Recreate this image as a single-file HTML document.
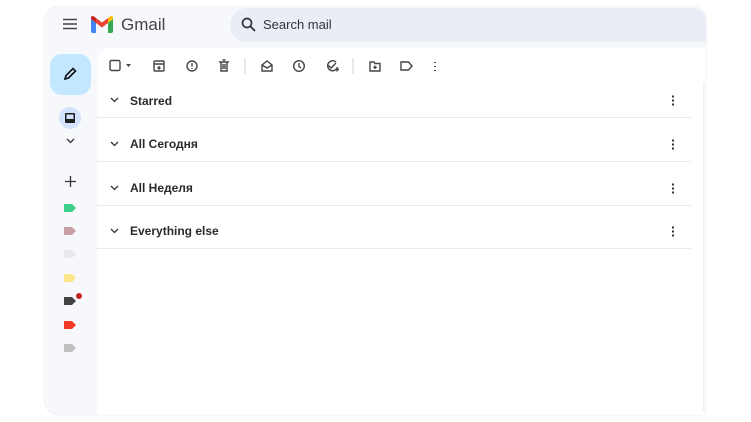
<!DOCTYPE html>
<html><head><style>
body{margin:0;width:751px;height:422px;background:#fff;position:relative;overflow:hidden;font-family:"Liberation Sans",Arial,sans-serif;}
.frame{position:absolute;left:44px;top:6px;width:662px;height:409px;background:#f6f8fc;border-radius:16px 14px 0 16px;box-shadow:0 0 1px #ccc;}
.main{position:absolute;left:97px;top:48px;width:609px;height:367px;background:#fff;border-radius:14px 0 0 0;}
.search{position:absolute;left:230px;top:8px;width:476px;height:34px;background:#e9eef6;border-radius:17px 14px 0 17px;}
.abs{position:absolute;}
.row{position:absolute;left:97px;width:594px;height:43px;border-bottom:1px solid #e8eaed;}
.row span{position:absolute;left:33px;top:12px;font-size:12px;font-weight:bold;color:#2a2a2a;}
.row svg.ch{position:absolute;left:13px;top:16px}
.row svg.k{position:absolute;left:574px;top:14px}
</style></head><body>
<div class="frame"></div>
<div class="search"></div>
<div class="main"></div>
<svg class="abs" style="left:63px;top:18px" width="14" height="12"><path d="M0 1.5h14M0 6h14M0 10.5h14" stroke="#444" stroke-width="1.5"/></svg>
<svg class="abs" style="left:91px;top:16px" width="22" height="17" viewBox="0 0 22 17">
<path d="M0 3v12a2 2 0 0 0 2 2h3V7z" fill="#4285f4"/><path d="M17 7v10h3a2 2 0 0 0 2-2V3z" fill="#34a853"/>
<path d="M0 3l5 4V2L3 0.5A2 2 0 0 0 0 3z" fill="#c5221f"/><path d="M5 2v5l6 4.5 6-4.5V2l-6 4.5z" fill="#ea4335"/><path d="M17 2v5l5-4a2 2 0 0 0-3-2.5z" fill="#fbbc04"/></svg>
<div class="abs" style="left:121px;top:15px;font-size:17px;color:#444">Gmail</div>
<svg class="abs" style="left:241px;top:17px" width="15" height="15"><circle cx="6" cy="6" r="4.5" fill="none" stroke="#333" stroke-width="1.7"/><path d="M9.3 9.3L14 14" stroke="#333" stroke-width="1.8"/></svg>
<div class="abs" style="left:263px;top:17px;font-size:13px;color:#333">Search mail</div>
<div class="abs" style="left:50px;top:54px;width:41px;height:41px;background:#c2e7ff;border-radius:12px"></div>
<svg class="abs" style="left:63px;top:67px" width="14" height="14"><path d="M2 12l1-3.5 7-7 2.5 2.5-7 7z" fill="none" stroke="#111" stroke-width="1.6"/></svg>
<div class="abs" style="left:59px;top:107px;width:22px;height:22px;background:#d3e3fd;border-radius:11px"></div>
<svg class="abs" style="left:64px;top:112px" width="12" height="12"><rect x="1" y="1" width="10" height="10" rx="1" fill="#1f1f1f"/><rect x="2.5" y="2.5" width="7" height="4.5" fill="#d3e3fd"/></svg>
<svg class="abs" style="left:66px;top:138px" width="9" height="6"><path d="M1 1l3.5 3.5L8 1" fill="none" stroke="#333" stroke-width="1.3"/></svg>
<svg class="abs" style="left:65px;top:176px" width="11" height="11"><path d="M5.5 0v11M0 5.5h11" stroke="#333" stroke-width="1.3"/></svg>
<svg class="abs" style="left:64px;top:204px" width="12" height="150">
<path d="M0 0h8l4 4-4 4H0z" fill="#3dd089"/>
<path d="M0 23h8l4 4-4 4H0z" fill="#c9a0a6"/>
<path d="M0 46h8l4 4-4 4H0z" fill="#e8e8ea"/>
<path d="M0 70h8l4 4-4 4H0z" fill="#fde68a"/>
<path d="M0 93h8l4 4-4 4H0z" fill="#444"/>
<path d="M0 117h8l4 4-4 4H0z" fill="#f23d26"/>
<path d="M0 140h8l4 4-4 4H0z" fill="#c0c0c0"/>
</svg>
<div class="abs" style="left:76px;top:293px;width:6px;height:6px;border-radius:3px;background:#c5221f"></div>
<svg class="abs" style="left:108px;top:58px" width="340" height="16" fill="none" stroke="#444" stroke-width="1.4">
<rect x="2" y="2.5" width="10" height="10" rx="1.5"/>
<path d="M18 6h5l-2.5 3z" fill="#444" stroke="none"/>
<rect x="46" y="3" width="10" height="10" rx="1"/><path d="M46 6h10M51 8v3M49.5 9.5l1.5 1.5 1.5-1.5"/>
<circle cx="84" cy="8" r="5"/><path d="M84 5v3.5M84 10v1"/>
<path d="M111 4h10M113 4v9h6V4M114.5 2h3M115 6v5M117 6v5"/>
<path d="M137 0v16" stroke="#ddd"/>
<path d="M154 7l5-4 5 4v6h-10z M154 7l5 3 5-3"/>
<circle cx="191" cy="8" r="5.3"/><path d="M191 5v3.5l2 1.5"/>
<path d="M228 4a5 5 0 1 0 1.5 5M220.5 7.5l2.5 2.5 5-5M227 11.5h4M229 9.5v4"/>
<path d="M245 0v16" stroke="#ddd"/>
<path d="M262 4h4l1 1.5h5v7.5h-10z M267 7.5v3.5M265.3 9.3h3.5"/>
<path d="M293 4h7.5l3.5 4-3.5 4h-7.5z"/>
<path d="M327 4v1M327 8v1M327 12v1" stroke-width="2"/>
</svg>
<div class="row" style="top:80px;height:37px"><svg class="ch" width="9" height="6" style="top:17px"><path d="M1 1l3.5 3.5L8 1" fill="none" stroke="#333" stroke-width="1.3"/></svg><span style="top:14px">Starred</span><svg class="k" width="4" height="14" style="top:14px"><path d="M2 1.5v2M2 5.5v2M2 9.5v2" stroke="#333" stroke-width="2"/></svg></div>
<div class="row" style="top:118px"><svg class="ch" width="9" height="6" style="top:23px"><path d="M1 1l3.5 3.5L8 1" fill="none" stroke="#333" stroke-width="1.3"/></svg><span style="top:19px">All Сегодня</span><svg class="k" width="4" height="14" style="top:20px"><path d="M2 1.5v2M2 5.5v2M2 9.5v2" stroke="#333" stroke-width="2"/></svg></div>
<div class="row" style="top:162px"><svg class="ch" width="9" height="6" style="top:23px"><path d="M1 1l3.5 3.5L8 1" fill="none" stroke="#333" stroke-width="1.3"/></svg><span style="top:19px">All Неделя</span><svg class="k" width="4" height="14" style="top:20px"><path d="M2 1.5v2M2 5.5v2M2 9.5v2" stroke="#333" stroke-width="2"/></svg></div>
<div class="row" style="top:205px"><svg class="ch" width="9" height="6" style="top:23px"><path d="M1 1l3.5 3.5L8 1" fill="none" stroke="#333" stroke-width="1.3"/></svg><span style="top:19px">Everything else</span><svg class="k" width="4" height="14" style="top:20px"><path d="M2 1.5v2M2 5.5v2M2 9.5v2" stroke="#333" stroke-width="2"/></svg></div>
<div class="abs" style="left:703px;top:82px;width:2px;height:330px;background:#f1f1f1"></div>
</body></html>
